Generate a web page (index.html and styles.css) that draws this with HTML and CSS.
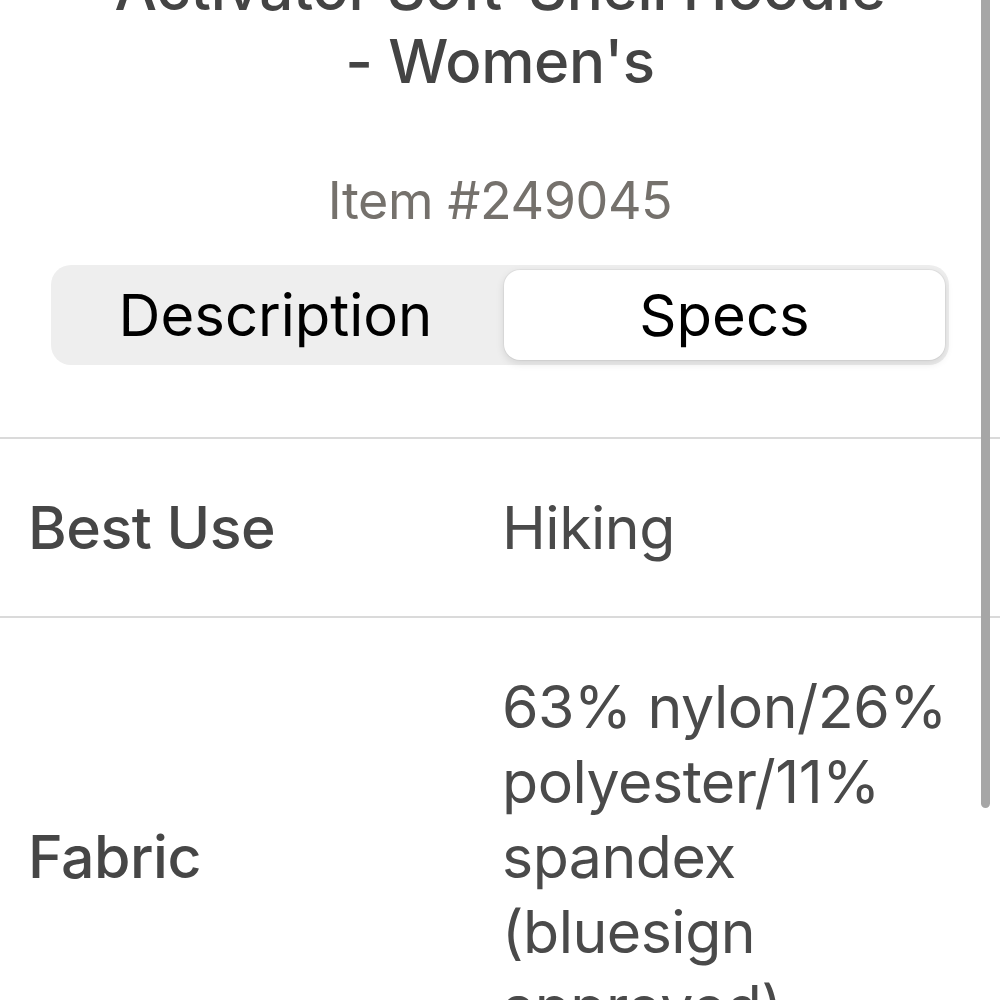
FILE: index.html
```html
<!DOCTYPE html>
<html lang="en">
<head>
<meta charset="utf-8">
<title>Specs</title>
<link rel="stylesheet" href="styles.css">
</head>
<body>
<div class="page">
  <h1 class="title">Activator Soft-Shell Hoodie - Women's</h1>
  <div class="item">Item #249045</div>
  <div class="seg">
    <div class="seg-btn">Description</div>
    <div class="seg-btn active">Specs</div>
  </div>
  <div class="specs">
    <div class="row">
      <div class="label">Best Use</div>
      <div class="value">Hiking</div>
    </div>
    <div class="row">
      <div class="label">Fabric</div>
      <div class="value">63% nylon/26% polyester/11% spandex (bluesign approved)</div>
    </div>
  </div>
  <div class="scrollbar"></div>
</div>
</body>
</html>
```
FILE: styles.css
```css
html, body {
  margin: 0;
  padding: 0;
  overflow: hidden;
  background: #ffffff;
}
body {
  font-family: Inter, "Noto Sans", "Liberation Sans", sans-serif;
}
.page {
  position: relative;
  width: 1000px;
  height: 1000px;
  overflow: hidden;
}
.title {
  margin: -48px 105px 0;
  font-size: 60px;
  line-height: 73px;
  font-weight: 500;
  color: #444444;
  text-align: center;
  letter-spacing: -0.3px;
}
.item {
  margin-top: 72px;
  font-size: 52px;
  line-height: 62px;
  color: #75716c;
  text-align: center;
  letter-spacing: -0.4px;
}
.seg {
  margin: 33px 51px 0;
  height: 100px;
  box-sizing: border-box;
  padding: 5px 4px;
  background: #eeeeee;
  border-radius: 20px;
  display: grid;
  grid-template-columns: 1fr 1fr;
  gap: 8px;
}
.seg-btn {
  display: flex;
  align-items: center;
  justify-content: center;
  font-size: 58px;
  color: #000000;
  border-radius: 16px;
}
.seg-btn.active {
  background: #ffffff;
  box-shadow: 0 3px 8px rgba(0, 0, 0, 0.12), 0 0 0 1px rgba(0, 0, 0, 0.04);
}
.specs {
  margin-top: 72px;
  border-top: 2px solid #dadada;
}
.row {
  display: grid;
  grid-template-columns: 474px 1fr;
  align-items: center;
  padding: 51px 30px 51px 28px;
  border-bottom: 2px solid #dadada;
  font-size: 59px;
  line-height: 75px;
  letter-spacing: -0.5px;
}
.label {
  font-weight: 500;
  color: #464646;
}
.value {
  color: #4a4a4a;
}
.scrollbar {
  position: absolute;
  top: -10px;
  right: 10px;
  width: 9px;
  height: 818px;
  border-radius: 5px;
  background: #a6a6a6;
}
```
